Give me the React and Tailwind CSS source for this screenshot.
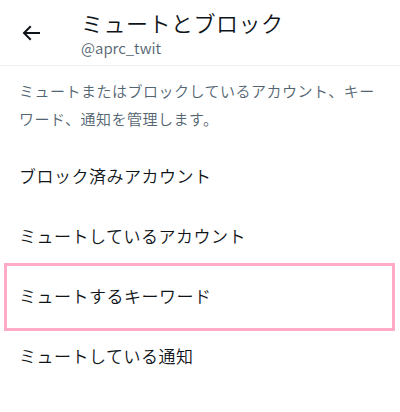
const font = { fontFamily: '"Noto Sans CJK JP", "Noto Sans", sans-serif' };

const items = [
  "ブロック済みアカウント",
  "ミュートしているアカウント",
  "ミュートするキーワード",
  "ミュートしている通知",
];

const App = () => {
  return (
    <div className="w-[400px] h-[412px] bg-white text-[#0f1419] overflow-hidden font-[350]" style={font}>
      <header className="flex items-center h-[66px] border-b border-[#eff3f4]">
        <div className="w-[81px] flex justify-start pl-[19px]">
          <svg viewBox="0 0 24 24" className="w-[24px] h-[24px]" fill="#0f1419">
            <path d="M7.414 13l5.043 5.04-1.414 1.42L3.586 12l7.457-7.46 1.414 1.42L7.414 11H21v2H7.414z" />
          </svg>
        </div>
        <div className="flex flex-col pt-[1px]">
          <h1 className="text-[22px] leading-[28px] tracking-[0.5px]">ミュートとブロック</h1>
          <p className="text-[15px] leading-[22px] text-[#536471] mt-[1px]">@aprc_twit</p>
        </div>
      </header>
      <p className="px-[19px] pt-[11px] text-[15px] leading-[28px] tracking-[0.5px] text-[#536471]">
        ミュートまたはブロックしているアカウント、キー<br />ワード、通知を管理します。
      </p>
      <ul className="mt-[13px]">
        {items.map((label, i) => (
          <li key={label} className="relative h-[60px] flex items-center pl-[19px] text-[17px] tracking-[0.5px]">
            {label}
            {i === 2 && (
              <span className="absolute left-[4px] right-[5px] top-[-3px] bottom-[-5px] border-[3px] border-[#ffaac8]" />
            )}
          </li>
        ))}
      </ul>
    </div>
  );
};

export default App;
